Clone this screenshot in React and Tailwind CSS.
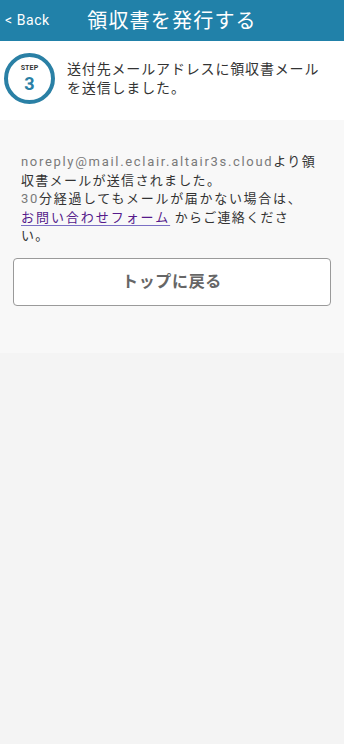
export default function App() {
  const font = { fontFamily: 'Roboto, "Noto Sans CJK JP", sans-serif' };
  return (
    <div className="min-h-[744px] bg-[#f4f4f4] text-[#333]" style={font}>
      <header className="relative h-[41px] bg-[#2181a9] flex items-center justify-center">
        <button className="absolute left-[5px] top-0 h-full flex items-center text-[14px] text-white tracking-[0.04em]">
          &lt; Back
        </button>
        <h1 className="text-[20px] text-white tracking-[0.06em] leading-none">領収書を発行する</h1>
      </header>

      <section className="bg-white flex items-center gap-[12px] pl-[4px] pr-[18px] pt-[12px] pb-[16px]">
        <div className="w-[51px] h-[51px] shrink-0 rounded-full border-[4px] border-[#2a80a5] flex flex-col items-center justify-center">
          <span className="text-[7px] font-bold leading-none tracking-[0.02em] text-[#333] mt-[1px]">STEP</span>
          <span className="text-[18px] font-bold leading-none text-[#2a80a5] mt-[3px]">3</span>
        </div>
        <p className="text-[14px] leading-[19px] tracking-[0.06em] text-[#333]">
          送付先メールアドレスに領収書メールを送信しました。
        </p>
      </section>

      <section className="bg-[#f8f8f8] px-[13px] pt-[33px] pb-[47px]">
        <p className="px-[8px] text-[13px] leading-[18.5px] tracking-[0.1em] text-[#333]">
          <span className="text-[#7a7a7a] tracking-[0.13em]">noreply@mail.eclair.altair3s.cloud</span>より領<br />
          収書メールが送信されました。<br />
          <span className="tracking-[0.13em]">
            <span className="text-[#7a7a7a]">30</span>分経過してもメールが届かない場合は、
          </span>
          <br />
          <a href="#" className="text-[#551a8b] tracking-[0.15em] underline decoration-[#7a6fc4] underline-offset-[3px]">お問い合わせフォーム</a> からご連絡くださ<br />
          い。
        </p>
        <button className="mt-[12px] w-full h-[48px] bg-white border border-[#9a9a9a] rounded-[4px] text-[16px] font-bold text-[#666] tracking-[0.04em]">
          トップに戻る
        </button>
      </section>
    </div>
  );
}
